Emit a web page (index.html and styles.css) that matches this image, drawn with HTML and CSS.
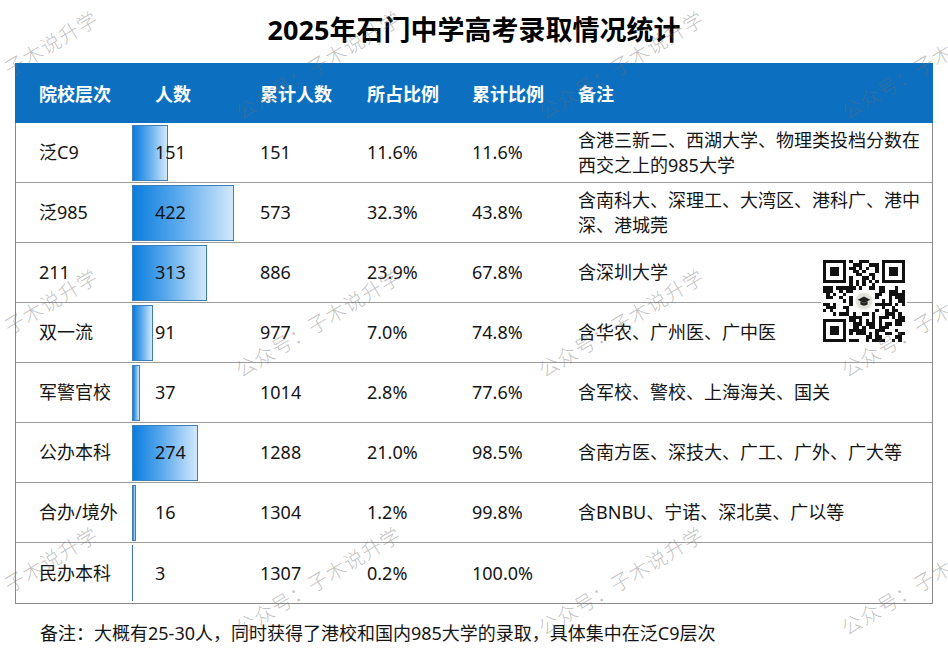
FILE: index.html
```html
<!DOCTYPE html>
<html lang="zh-CN">
<head>
<meta charset="utf-8">
<title>2025年石门中学高考录取情况统计</title>
<link rel="stylesheet" href="styles.css">
</head>
<body>
<div class="page">
  <h1 class="title">2025年石门中学高考录取情况统计</h1>

  <div class="table">
    <div class="row head">
      <div class="c c1">院校层次</div>
      <div class="c">人数</div>
      <div class="c">累计人数</div>
      <div class="c">所占比例</div>
      <div class="c">累计比例</div>
      <div class="c">备注</div>
    </div>
    <div class="body">
      <div class="row">
        <div class="c c1">泛C9</div>
        <div class="c c2"><span class="bar" style="width:36px"></span><span class="num">151</span></div>
        <div class="c">151</div>
        <div class="c">11.6%</div>
        <div class="c">11.6%</div>
        <div class="c note">含港三新二、西湖大学、物理类投档分数在西交之上的985大学</div>
      </div>
      <div class="row">
        <div class="c c1">泛985</div>
        <div class="c c2"><span class="bar" style="width:102px"></span><span class="num">422</span></div>
        <div class="c">573</div>
        <div class="c">32.3%</div>
        <div class="c">43.8%</div>
        <div class="c note">含南科大、深理工、大湾区、港科广、港中深、港城莞</div>
      </div>
      <div class="row">
        <div class="c c1">211</div>
        <div class="c c2"><span class="bar" style="width:75px"></span><span class="num">313</span></div>
        <div class="c">886</div>
        <div class="c">23.9%</div>
        <div class="c">67.8%</div>
        <div class="c note">含深圳大学</div>
      </div>
      <div class="row">
        <div class="c c1">双一流</div>
        <div class="c c2"><span class="bar" style="width:21px"></span><span class="num">91</span></div>
        <div class="c">977</div>
        <div class="c">7.0%</div>
        <div class="c">74.8%</div>
        <div class="c note">含华农、广州医、广中医</div>
      </div>
      <div class="row">
        <div class="c c1">军警官校</div>
        <div class="c c2"><span class="bar" style="width:8px"></span><span class="num">37</span></div>
        <div class="c">1014</div>
        <div class="c">2.8%</div>
        <div class="c">77.6%</div>
        <div class="c note">含军校、警校、上海海关、国关</div>
      </div>
      <div class="row">
        <div class="c c1">公办本科</div>
        <div class="c c2"><span class="bar" style="width:66px"></span><span class="num">274</span></div>
        <div class="c">1288</div>
        <div class="c">21.0%</div>
        <div class="c">98.5%</div>
        <div class="c note">含南方医、深技大、广工、广外、广大等</div>
      </div>
      <div class="row">
        <div class="c c1">合办/境外</div>
        <div class="c c2"><span class="bar" style="width:4px"></span><span class="num">16</span></div>
        <div class="c">1304</div>
        <div class="c">1.2%</div>
        <div class="c">99.8%</div>
        <div class="c note">含BNBU、宁诺、深北莫、广以等</div>
      </div>
      <div class="row last">
        <div class="c c1">民办本科</div>
        <div class="c c2"><span class="bar thin" style="width:1px"></span><span class="num">3</span></div>
        <div class="c">1307</div>
        <div class="c">0.2%</div>
        <div class="c">100.0%</div>
        <div class="c note"></div>
      </div>
    </div>
  </div>

  <p class="footnote">备注：大概有25-30人，同时获得了港校和国内985大学的录取，具体集中在泛C9层次</p>

  <div class="qr">
    <svg viewBox="0 0 25 25" width="82" height="82" shape-rendering="crispEdges">
      <path id="qrm" fill="#111" fill-rule="evenodd" d=""></path>
      <rect x="9.5" y="9.5" width="6" height="6" rx="1" fill="#fff"></rect>
      <circle cx="12.5" cy="12.5" r="2.6" fill="#e4e2dc" shape-rendering="auto"></circle>
      <path d="M10.6 12.1 L12.5 11.1 L14.4 12.1 L12.5 13.1 Z M11.4 12.6 v1 q1.1 .7 2.2 0 v-1 l-1.1 .6 Z" fill="#222" shape-rendering="auto"></path>
    </svg>
  </div>

  <div class="watermarks" aria-hidden="true">
    <div class="wm"><span>公众号：子木说升学</span></div>
    <div class="wm"><span>公众号：子木说升学</span></div>
    <div class="wm"><span>公众号：子木说升学</span></div>
    <div class="wm"><span>公众号：子木说升学</span></div>
    <div class="wm"><span>公众号：子木说升学</span></div>
    <div class="wm"><span>公众号：子木说升学</span></div>
    <div class="wm"><span>公众号：子木说升学</span></div>
    <div class="wm"><span>公众号：子木说升学</span></div>
    <div class="wm"><span>公众号：子木说升学</span></div>
    <div class="wm"><span>公众号：子木说升学</span></div>
    <div class="wm"><span>公众号：子木说升学</span></div>
    <div class="wm"><span>公众号：子木说升学</span></div>
  </div>
</div>
<script src="script.js"></script>
</body>
</html>
```

FILE: styles.css
```css
html, body {
  margin: 0;
  padding: 0;
  background: #fff;
}

.page {
  position: relative;
  width: 948px;
  height: 658px;
  overflow: hidden;
  padding: 0 15px;
  box-sizing: border-box;
  font-family: "Noto Sans", "Noto Sans CJK SC", sans-serif;
  color: #151515;
}

.title {
  margin: 0;
  height: 63px;
  box-sizing: border-box;
  padding-top: 11px;
  text-align: center;
  font-family: "Noto Sans", "Noto Sans CJK SC", sans-serif;
  font-size: 27px;
  line-height: 38px;
  font-weight: 700;
  color: #000;
}

.table {
  width: 918px;
}

.row {
  display: grid;
  grid-template-columns: 116px 105px 107px 105px 106px 1fr;
  height: 60px;
  box-sizing: border-box;
  border-bottom: 1px solid #9c9c9c;
  font-size: 18px;
  line-height: 25px;
}

.row.last {
  border-bottom: none;
}

.head {
  background: #0c6fc0;
  color: #fff;
  font-weight: 700;
  border-bottom: none;
  padding-left: 1px;
  font-family: "Noto Sans CJK SC", sans-serif;
}

.body {
  border: 1px solid #8a8a8a;
  border-top: none;
}

.c {
  display: flex;
  align-items: center;
  padding-left: 23px;
  min-width: 0;
}

.c2 {
  display: grid;
  align-items: center;
  padding-left: 0;
}

.c2 > * {
  grid-area: 1 / 1;
}

.bar {
  display: block;
  height: 56px;
  box-sizing: border-box;
  border: 1px solid #3f7fb6;
  background: linear-gradient(to right, #0a7ddf, #5aa9ec 45%, #d2e8fb);
}

.bar.thin {
  border: none;
  background: #3a78b0;
}

.num {
  margin-left: 23px;
  position: relative;
}

.note {
  padding-right: 8px;
}

.footnote {
  margin: 0;
  padding: 17px 0 0 25px;
  font-size: 18px;
  line-height: 25px;
  color: #151515;
}

.qr {
  position: absolute;
  left: 821px;
  top: 258px;
  padding: 2px;
  background: #fff;
  line-height: 0;
}

.qr svg {
  display: block;
}

.watermarks {
  position: absolute;
  left: -61px;
  top: -136px;
  display: grid;
  grid-template-columns: repeat(4, 303px);
  grid-template-rows: repeat(3, 258px);
  pointer-events: none;
}

.wm {
  display: flex;
  align-items: flex-end;
}

.wm span {
  display: block;
  white-space: nowrap;
  font-family: "Noto Sans CJK SC", sans-serif;
  font-weight: 300;
  font-size: 20px;
  line-height: 20px;
  letter-spacing: 1px;
  color: rgba(110, 110, 110, 0.42);
  transform-origin: 0 100%;
  transform: rotate(-31deg);
}
```

FILE: script.js
```js
(function () {
  var N = 25;
  var seed = 12345;
  function rnd() {
    seed = (seed * 16807) % 2147483647;
    return seed / 2147483647;
  }
  function finder(x, y) {
    return 'M' + x + ' ' + y + 'h7v7h-7z' +
      'M' + (x + 1) + ' ' + (y + 1) + 'h5v5h-5z' +
      'M' + (x + 2) + ' ' + (y + 2) + 'h3v3h-3z';
  }
  var d = finder(0, 0) + finder(18, 0) + finder(0, 18);
  for (var y = 0; y < N; y++) {
    for (var x = 0; x < N; x++) {
      if (x < 8 && y < 8) continue;
      if (x > 16 && y < 8) continue;
      if (x < 8 && y > 16) continue;
      if (x >= 9 && x <= 15 && y >= 9 && y <= 15) continue;
      var on;
      if (y === 6) on = x % 2 === 0;
      else if (x === 6) on = y % 2 === 0;
      else on = rnd() < 0.52;
      if (on) d += 'M' + x + ' ' + y + 'h1v1h-1z';
    }
  }
  document.getElementById('qrm').setAttribute('d', d);
})();
```
